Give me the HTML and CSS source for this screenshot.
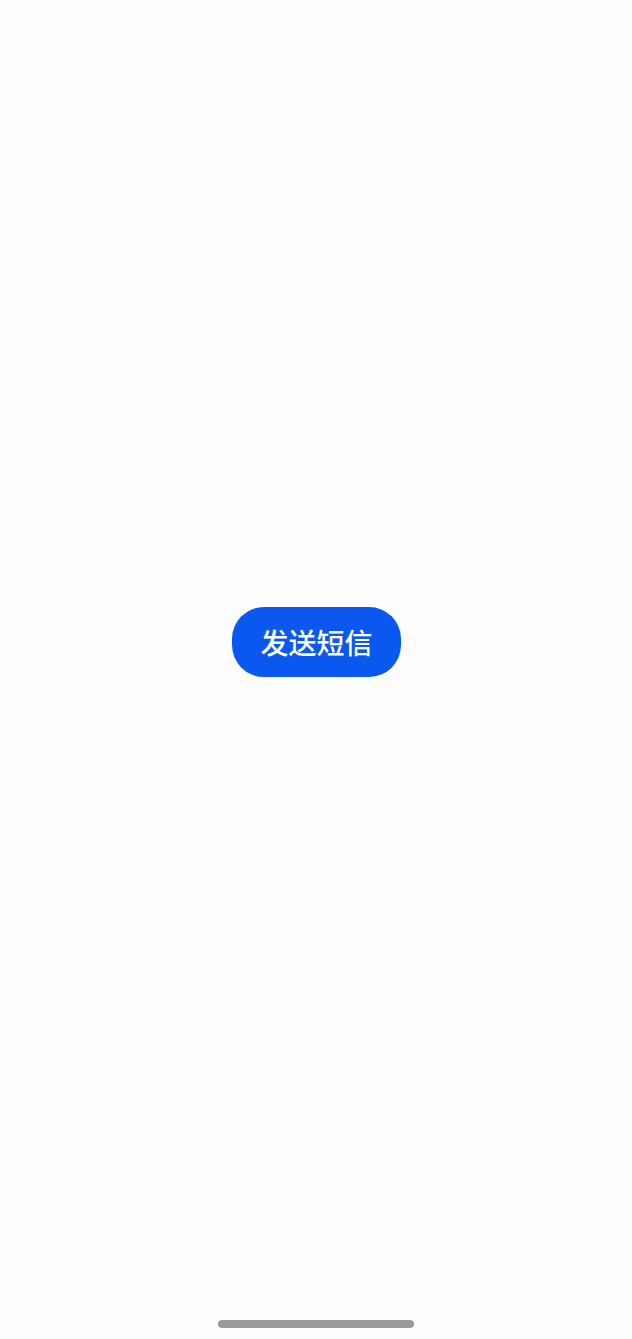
FILE: index.html
```html
<!DOCTYPE html>
<html lang="zh-CN">
<head>
<meta charset="utf-8">
<link rel="stylesheet" href="styles.css">
</head>
<body>
<div class="screen">
  <main class="content">
    <button class="sms-btn" type="button">发送短信</button>
  </main>
  <div class="home-indicator"></div>
</div>
</body>
</html>
```
FILE: styles.css
```css
html, body {
  margin: 0;
  padding: 0;
  background: #fdfdfc;
}
.screen {
  width: 632px;
  height: 1339px;
  display: flex;
  flex-direction: column;
  align-items: center;
  box-sizing: border-box;
  padding-bottom: 11px;
}
.content {
  flex: 1;
  display: flex;
  flex-direction: column;
  align-items: center;
  padding-top: 607px;
  box-sizing: border-box;
}
.sms-btn {
  width: 169px;
  height: 70px;
  border: none;
  border-radius: 32px;
  background: #0a58f0;
  color: #ffffff;
  font-family: "Noto Sans CJK SC", "Noto Sans", sans-serif;
  font-size: 28px;
  font-weight: 500;
  letter-spacing: 0;
  padding: 0;
  display: flex;
  align-items: center;
  justify-content: center;
  margin-left: 1px;
}
.home-indicator {
  width: 196px;
  height: 8px;
  border-radius: 4px;
  background: #999999;
}
```
